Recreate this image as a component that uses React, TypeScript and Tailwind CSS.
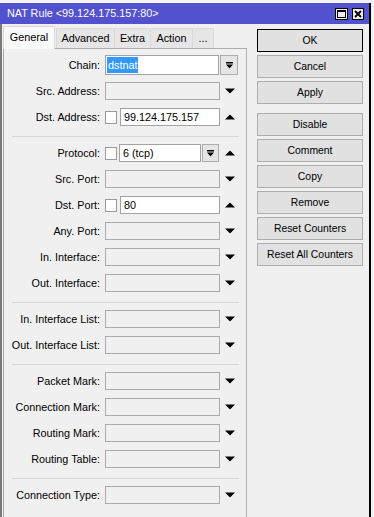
import React from 'react';

type Arrow = 'up' | 'down' | undefined;

const Tri = ({ dir }: { dir: 'up' | 'down' }) => (
  <svg width="10" height="6" viewBox="0 0 10 6" className="block">
    {dir === 'down' ? (
      <polygon points="0,0.5 10,0.5 5,5.5" fill="#000" />
    ) : (
      <polygon points="5,0.5 10,5.5 0,5.5" fill="#000" />
    )}
  </svg>
);

const DropBtn = ({ className }: { className: string }) => (
  <div className={`flex items-center justify-center border border-[#adadad] bg-[#e5e5e5] ${className}`}>
    <svg width="7" height="7" viewBox="0 0 7 7" className="block">
      <rect x="0" y="0" width="7" height="1.5" fill="#000" />
      <polygon points="0,2.5 7,2.5 3.5,6.5" fill="#000" />
    </svg>
  </div>
);

const Check = () => <div className="h-[13px] w-[12px] shrink-0 border border-[#9a9a9a] bg-white" />;

const Empty = () => <div className="h-[18px] w-full border border-[#ababab] bg-[#f0f0f0]" />;

const Row = ({ label, arrow, children }: { label: string; arrow?: Arrow; children: React.ReactNode }) => (
  <div className="flex h-[26px] items-center">
    <div className="w-[96px] text-right whitespace-nowrap">{label}:</div>
    <div className="ml-[5px] flex w-[115px] items-center">{children}</div>
    {arrow && (
      <div className="ml-[5px]">
        <Tri dir={arrow} />
      </div>
    )}
  </div>
);

const Sep = () => (
  <div className="h-[10px] pt-[6px] pl-[8px]">
    <div className="w-[227px] border-t border-[#d7d7d7]" />
  </div>
);

const Btn = ({ children, def }: { children: React.ReactNode; def?: boolean }) => (
  <div
    className={`flex h-[23px] items-center justify-center border bg-[#e1e1e1] text-[10.4px] ${
      def ? 'border-black' : 'border-[#adadad]'
    }`}
  >
    {children}
  </div>
);

export default function App() {
  return (
    <div className="relative h-[517px] w-[374px] overflow-hidden bg-[#f4f4f4] font-['Liberation_Sans',Arial,sans-serif] text-[10.8px] text-black">
      <div className="mt-[3px] flex h-[514px] w-[371px] flex-col border-r-2 border-black">
        {/* title bar */}
        <div className="flex h-[21px] shrink-0 items-center bg-[#5252cf] pl-[7px] pr-[5px]">
          <span className="text-white">NAT Rule &lt;99.124.175.157:80&gt;</span>
          <div className="ml-auto flex gap-[4px] pt-[1px]">
            <div className="flex h-[12px] w-[13px] items-center justify-center border border-black bg-[#ececec]">
              <div className="h-[8px] w-[9px] border border-black border-t-2" />
            </div>
            <div className="flex h-[12px] w-[12px] items-center justify-center border border-black bg-[#ececec]">
              <svg width="8" height="8" viewBox="0 0 8 8" className="block">
                <path d="M1 1 L7 7 M7 1 L1 7" stroke="#000" strokeWidth="1.8" />
              </svg>
            </div>
          </div>
        </div>

        {/* body */}
        <div className="flex flex-1 border-l-2 border-[#7b7b7b] bg-[#f0f0f0] pl-[1px]">
          {/* left: tabs + panel */}
          <div className="flex w-[244px] flex-col">
            <div className="flex h-[24px] shrink-0 items-end pt-[2px]">
              <div className="relative z-10 -mb-px flex h-[23px] w-[52px] items-center justify-center border border-b-0 border-[#d9d9d9] bg-[#f9f9f9] pb-[2px]">
                General
              </div>
              <div className="ml-px flex h-[20px] w-[59px] items-center justify-center border border-b-0 border-[#d9d9d9] bg-[#e6e6e6]">
                Advanced
              </div>
              <div className="flex h-[20px] w-[36px] items-center justify-center border border-b-0 border-l-0 border-[#d9d9d9] bg-[#e6e6e6]">
                Extra
              </div>
              <div className="flex h-[20px] w-[42px] items-center justify-center border border-b-0 border-l-0 border-[#d9d9d9] bg-[#e6e6e6]">
                Action
              </div>
              <div className="flex h-[20px] w-[21px] items-center justify-center border border-b-0 border-l-0 border-[#d9d9d9] bg-[#e6e6e6]">
                ...
              </div>
            </div>

            <div className="flex-1 border border-b-0 border-[#adadad] bg-[#f0f0f0] pt-[3px]">
              <div className="flex h-[26px] items-center">
                <div className="w-[96px] text-right">Chain:</div>
                <div className="ml-[5px] flex h-[20px] w-[114px] items-center border border-[#a3a3a3] bg-white pl-[1px]">
                  <span className="bg-[#3399ff] px-[1px] leading-[16px] text-white">dstnat</span>
                </div>
                <DropBtn className="ml-[1px] h-[20px] w-[18px]" />
              </div>
              <Row label="Src. Address" arrow="down">
                <Empty />
              </Row>
              <Row label="Dst. Address" arrow="up">
                <Check />
                <div className="ml-[3px] flex h-[18px] flex-1 items-center border border-[#a3a3a3] bg-white pl-[3px]">
                  99.124.175.157
                </div>
              </Row>
              <Sep />
              <Row label="Protocol" arrow="up">
                <Check />
                <div className="ml-[2px] flex h-[18px] flex-1 items-center border border-[#a3a3a3] bg-white pl-[3px]">
                  6 (tcp)
                </div>
                <DropBtn className="ml-[1px] mr-[1px] h-[18px] w-[17px]" />
              </Row>
              <Row label="Src. Port" arrow="down">
                <Empty />
              </Row>
              <Row label="Dst. Port" arrow="up">
                <Check />
                <div className="ml-[3px] flex h-[18px] flex-1 items-center border border-[#a3a3a3] bg-white pl-[3px]">
                  80
                </div>
              </Row>
              <Row label="Any. Port" arrow="down">
                <Empty />
              </Row>
              <Row label="In. Interface" arrow="down">
                <Empty />
              </Row>
              <Row label="Out. Interface" arrow="down">
                <Empty />
              </Row>
              <Sep />
              <Row label="In. Interface List" arrow="down">
                <Empty />
              </Row>
              <Row label="Out. Interface List" arrow="down">
                <Empty />
              </Row>
              <Sep />
              <Row label="Packet Mark" arrow="down">
                <Empty />
              </Row>
              <Row label="Connection Mark" arrow="down">
                <Empty />
              </Row>
              <Row label="Routing Mark" arrow="down">
                <Empty />
              </Row>
              <Row label="Routing Table" arrow="down">
                <Empty />
              </Row>
              <Sep />
              <Row label="Connection Type" arrow="down">
                <Empty />
              </Row>
            </div>
          </div>

          {/* right: buttons */}
          <div className="ml-[10px] flex w-[106px] flex-col gap-[3px] pt-[5px]">
            <Btn def>OK</Btn>
            <Btn>Cancel</Btn>
            <Btn>Apply</Btn>
            <div className="mt-[6px]">
              <Btn>Disable</Btn>
            </div>
            <Btn>Comment</Btn>
            <Btn>Copy</Btn>
            <Btn>Remove</Btn>
            <Btn>Reset Counters</Btn>
            <Btn>Reset All Counters</Btn>
          </div>
        </div>
      </div>
    </div>
  );
}
